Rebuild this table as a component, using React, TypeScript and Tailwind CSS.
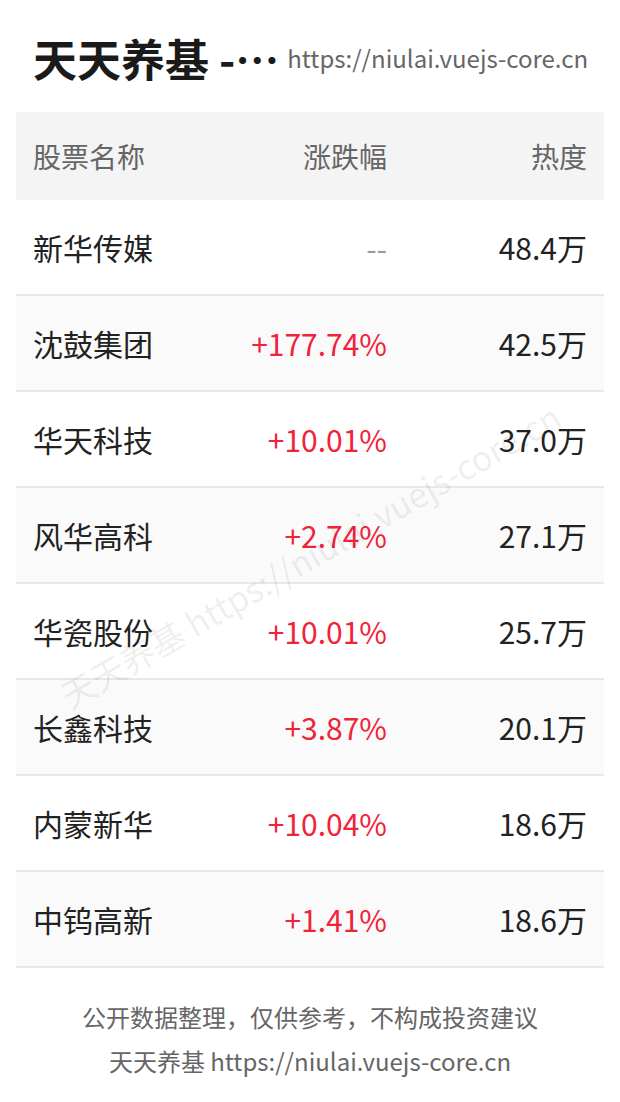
const rows = [
  { name: '新华传媒', change: '--', heat: '48.4万' },
  { name: '沈鼓集团', change: '+177.74%', heat: '42.5万' },
  { name: '华天科技', change: '+10.01%', heat: '37.0万' },
  { name: '风华高科', change: '+2.74%', heat: '27.1万' },
  { name: '华瓷股份', change: '+10.01%', heat: '25.7万' },
  { name: '长鑫科技', change: '+3.87%', heat: '20.1万' },
  { name: '内蒙新华', change: '+10.04%', heat: '18.6万' },
  { name: '中钨高新', change: '+1.41%', heat: '18.6万' },
];

const font = "font-['Noto_Sans_CJK_SC','Noto_Sans',sans-serif]";

export default function App() {
  return (
    <div className={`relative min-h-[1102px] w-[620px] overflow-hidden bg-white ${font}`}>
      {/* header */}
      <div className="mt-[14px] flex h-[88px] items-center gap-2 px-[33px]">
        <h1 className="whitespace-nowrap text-[44px] font-bold leading-none text-[#1a1a1a]">天天养基 -…</h1>
        <span className="whitespace-nowrap text-[24px] leading-none text-[#666]">https://niulai.vuejs-core.cn</span>
      </div>

      {/* table */}
      <div className="mx-4 mt-[10px]">
        <div className="grid h-[88px] grid-cols-[1fr_180px_200px] items-center bg-[#f4f4f4] px-[17px] text-[28px] text-[#666]">
          <span>股票名称</span>
          <span className="text-right">涨跌幅</span>
          <span className="text-right">热度</span>
        </div>
        {rows.map((r, i) => (
          <div
            key={r.name}
            className={`grid h-[96px] grid-cols-[1fr_180px_200px] items-center border-b-2 border-[#e8e8e8] px-[17px] text-[30px] ${
              i % 2 === 1 ? 'bg-[#fafafa]' : 'bg-white'
            }`}
          >
            <span className="text-[#222]">{r.name}</span>
            <span className={`text-right ${r.change === '--' ? 'text-[#999]' : 'text-[#f0233a]'}`}>{r.change}</span>
            <span className="text-right text-[#222]">{r.heat}</span>
          </div>
        ))}
      </div>

      {/* footer */}
      <div className="pt-[27px] text-center text-[24px] leading-[44px] text-[#666]">
        <p>公开数据整理，仅供参考，不构成投资建议</p>
        <p>天天养基 https://niulai.vuejs-core.cn</p>
      </div>

      {/* watermark */}
      <div className="pointer-events-none absolute left-[310px] top-[555px] -translate-x-1/2 -translate-y-1/2 -rotate-[30deg] whitespace-nowrap text-[34px] text-[#000]/[0.08]">
        天天养基 https://niulai.vuejs-core.cn
      </div>
    </div>
  );
}
